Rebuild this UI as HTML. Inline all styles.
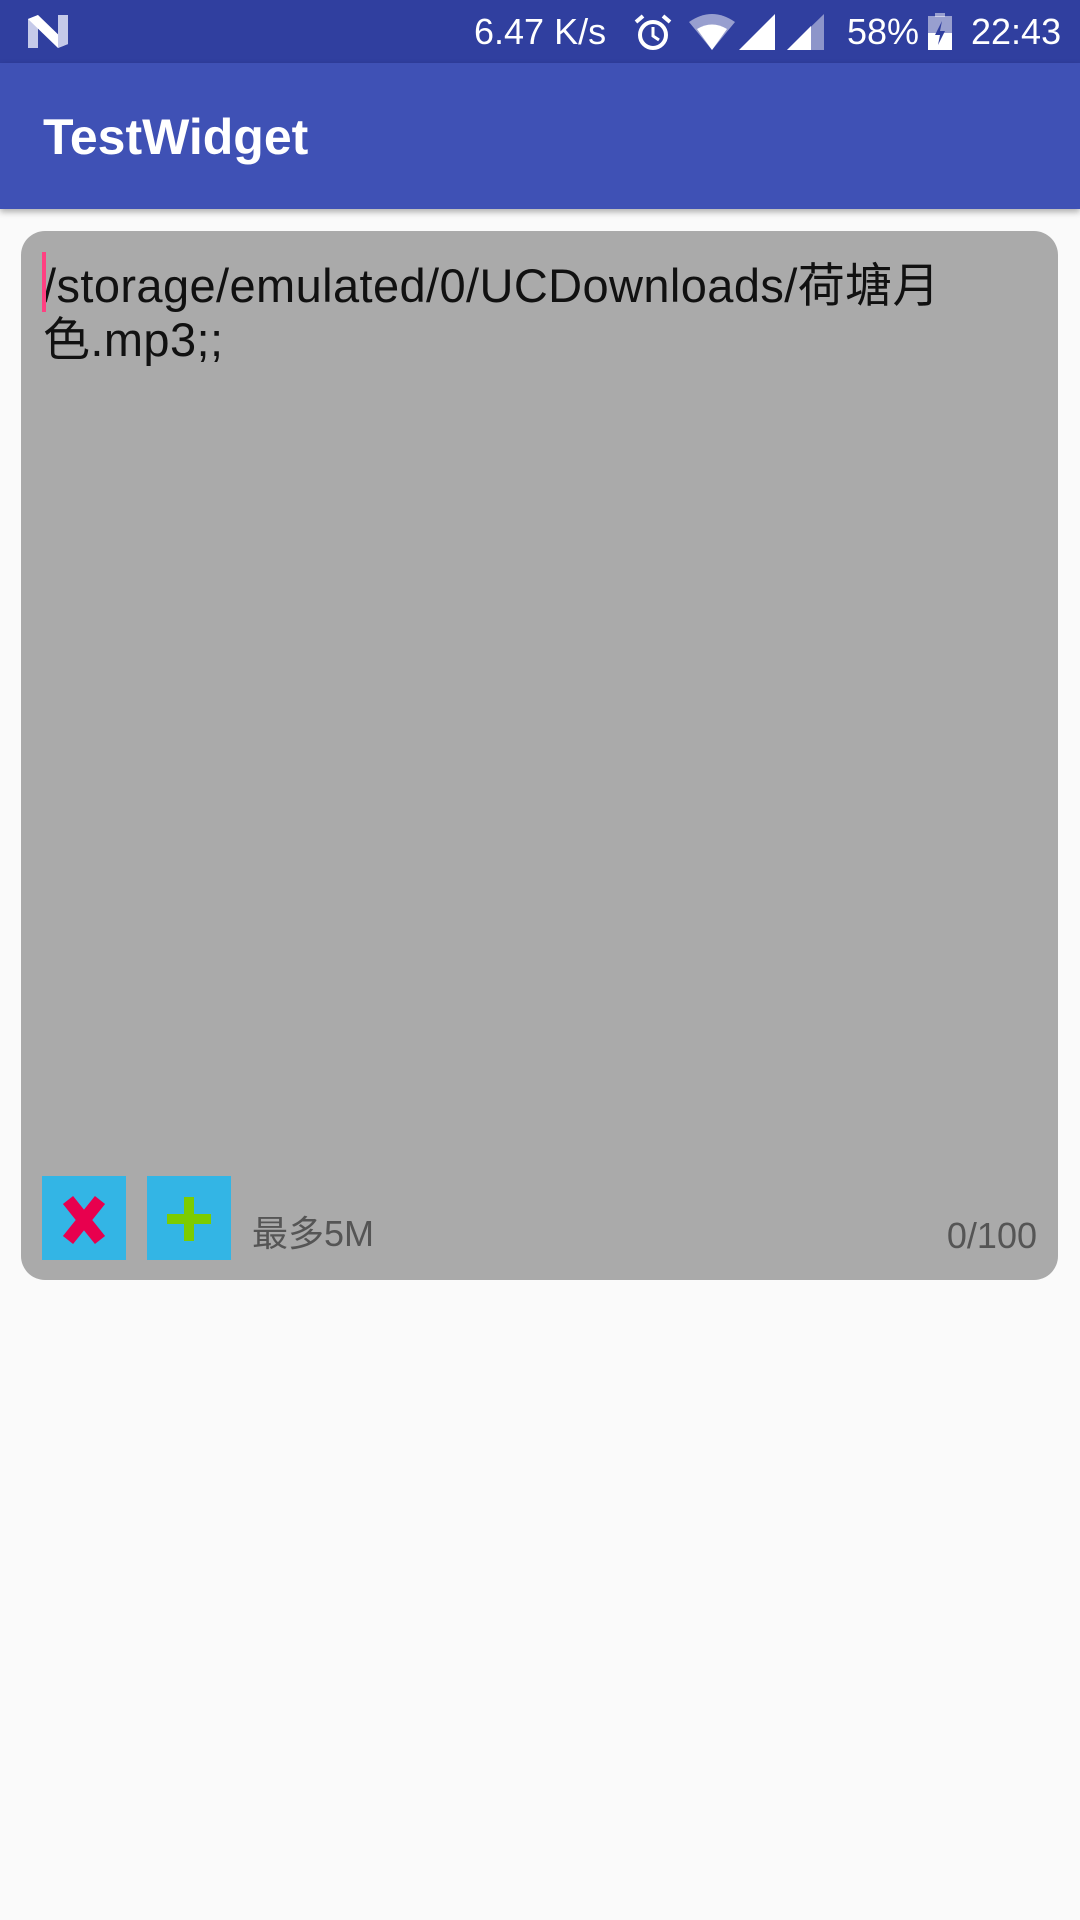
<!DOCTYPE html>
<html><head><meta charset="utf-8"><style>
*{margin:0;padding:0;box-sizing:border-box}
body{width:1080px;height:1920px;background:#fafafa;font-family:"Liberation Sans","Noto Sans CJK SC",sans-serif;position:relative;overflow:hidden}
.sb{position:absolute;left:0;top:0;width:1080px;height:63px;background:#303f9f;color:#fff}
.sb span{position:absolute;top:13px;font-size:36px;line-height:38px}
.ab{position:absolute;left:0;top:63px;width:1080px;height:146px;background:#3f51b5;box-shadow:0 3px 6px rgba(0,0,0,.3)}
.ab div{position:absolute;left:43px;top:45px;font-size:50px;font-weight:bold;color:#fff}
.card{position:absolute;left:21px;top:231px;width:1037px;height:1049px;background:#aaaaaa;border-radius:24px}
.txt{position:absolute;left:43px;top:259px;width:1000px;font-size:47px;line-height:54px;letter-spacing:0.4px;color:#111}
.cur{position:absolute;left:42px;top:252px;width:4px;height:60px;background:#ff4081}
.btn{position:absolute;top:1176px;width:84px;height:84px;background:#33b5e5}
.lbl{position:absolute;font-size:36px;line-height:40px;color:#555}
</style></head><body>
<div class="sb">
<svg style="position:absolute;left:28px;top:15px" width="40" height="33" viewBox="0 0 40 33"><path d="M0 4 L10 0 L10 33 L0 33Z" fill="#c5cae9"/><path d="M0 4 L10 0 L40 29 L30 33Z" fill="#fff"/><path d="M30 0 L40 0 L40 29 L30 33Z" fill="#c5cae9"/></svg>
<span style="left:474px">6.47 K/s</span>
<svg style="position:absolute;left:634px;top:14px" width="38" height="38" viewBox="0 0 38 38"><circle cx="19" cy="21" r="13" fill="none" stroke="#fff" stroke-width="4"/><path d="M19 13v9l6 4" fill="none" stroke="#fff" stroke-width="3"/><path d="M2 8l7-6M36 8l-7-6" stroke="#fff" stroke-width="4"/></svg>
<svg style="position:absolute;left:689px;top:14px" width="46" height="36" viewBox="0 0 46 36"><path d="M0 8 Q23 -8 46 8 L23 36Z" fill="#fff" opacity=".5"/><path d="M8 15 Q23 6 38 15 L23 36Z" fill="#fff"/></svg>
<svg style="position:absolute;left:739px;top:14px" width="36" height="36"><path d="M0 36 L36 0 L36 36Z" fill="#fff"/></svg>
<svg style="position:absolute;left:787px;top:14px" width="37" height="36"><path d="M0 36 L37 0 L37 36Z" fill="#fff" opacity=".45"/><path d="M0 36 L24 12 L24 36Z" fill="#fff"/></svg>
<span style="left:847px">58%</span>
<svg style="position:absolute;left:928px;top:13px" width="24" height="37" viewBox="0 0 24 37"><rect x="7" y="0" width="10" height="4" fill="#fff" opacity=".5"/><rect x="0" y="3" width="24" height="34" fill="#fff" opacity=".5"/><rect x="0" y="20" width="24" height="17" fill="#fff"/><path d="M14 8 L7 22 L12 22 L10 32 L17 18 L12 18Z" fill="#303f9f"/></svg>
<span style="left:971px">22:43</span>
</div>
<div class="ab"><div>TestWidget</div></div>
<div class="card"></div>
<div class="txt">/storage/emulated/0/UCDownloads/荷塘月<br>色.mp3;;</div>
<div class="cur"></div>
<div class="btn" style="left:42px"><svg width="84" height="84" viewBox="0 0 84 84"><path d="M26 24 L58 64 M58 24 L26 64" stroke="#e8004e" stroke-width="13"/></svg></div>
<div class="btn" style="left:147px"><svg width="84" height="84" viewBox="0 0 84 84"><path d="M42 21 V65 M20 43 H64" stroke="#7ccc00" stroke-width="10"/></svg></div>
<div class="lbl" style="left:252px;top:1214px">最多5M</div>
<div class="lbl" style="right:43px;top:1216px">0/100</div>
</body></html>
